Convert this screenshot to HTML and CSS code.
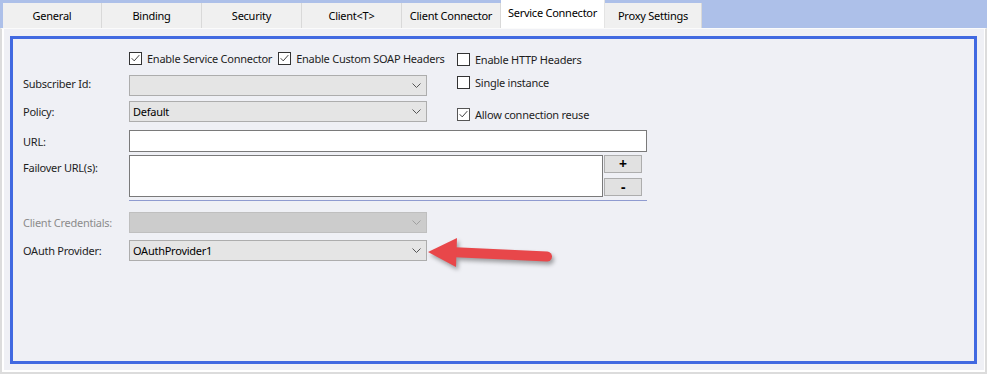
FILE: index.html
```html
<!DOCTYPE html>
<html>
<head>
    <title>Service Connector</title>
    <link rel="stylesheet" href="styles.css">
</head>
<body>
    <div class="window">
        <div class="tabs">
            <div class="tab w99">General</div>
            <div class="tab">Binding</div>
            <div class="tab">Security</div>
            <div class="tab">Client&lt;T&gt;</div>
            <div class="tab w99">Client Connector</div>
            <div class="tab active">Service Connector</div>
            <div class="tab w97">Proxy Settings</div>
        </div>

        <div class="page">
            <div class="group">
                <div class="top">
                    <div class="left">
                        <div class="checks">
                            <label class="check">
                                <span class="box"><svg viewBox="0 0 13 13"><path d="M2 6.2 L5 9.3 L11 2.5"/></svg></span>
                                Enable Service Connector
                            </label>
                            <label class="check">
                                <span class="box"><svg viewBox="0 0 13 13"><path d="M2 6.2 L5 9.3 L11 2.5"/></svg></span>
                                Enable Custom SOAP Headers
                            </label>
                        </div>
                        <div class="field">
                            <span class="label raised">Subscriber Id:</span>
                            <div class="combo">
                                <span class="value"></span>
                                <svg class="chev" viewBox="0 0 9 5"><polyline points="0.5,0.5 4.5,4.5 8.5,0.5"/></svg>
                            </div>
                        </div>
                        <div class="field policy">
                            <span class="label">Policy:</span>
                            <div class="combo">
                                <span class="value">Default</span>
                                <svg class="chev" viewBox="0 0 9 5"><polyline points="0.5,0.5 4.5,4.5 8.5,0.5"/></svg>
                            </div>
                        </div>
                    </div>
                    <div class="right">
                        <label class="check http">
                            <span class="box"></span>
                            Enable HTTP Headers
                        </label>
                        <label class="check single">
                            <span class="box"></span>
                            Single instance
                        </label>
                        <label class="check reuse">
                            <span class="box"><svg viewBox="0 0 13 13"><path d="M2 6.2 L5 9.3 L11 2.5"/></svg></span>
                            Allow connection reuse
                        </label>
                    </div>
                </div>

                <div class="field url">
                    <span class="label">URL:</span>
                    <div class="textbox"></div>
                </div>

                <div class="field failover">
                    <span class="label">Failover URL(s):</span>
                    <div class="textarea"></div>
                    <div class="buttons">
                        <div class="btn">+</div>
                        <div class="btn">-</div>
                    </div>
                </div>
                <div class="rule"></div>

                <div class="field creds disabled">
                    <span class="label">Client Credentials:</span>
                    <div class="combo">
                        <span class="value"></span>
                        <svg class="chev" viewBox="0 0 9 5"><polyline points="0.5,0.5 4.5,4.5 8.5,0.5"/></svg>
                    </div>
                </div>
                <div class="field oauth">
                    <span class="label">OAuth Provider:</span>
                    <div class="combo">
                        <span class="value">OAuthProvider1</span>
                        <svg class="chev" viewBox="0 0 9 5"><polyline points="0.5,0.5 4.5,4.5 8.5,0.5"/></svg>
                    </div>
                </div>
            </div>
        </div>

        <svg class="arrow" viewBox="0 0 145 50" width="145" height="50">
            <line x1="30" y1="24" x2="127" y2="28.5"/>
            <polygon points="8,24 37,10 36,39"/>
        </svg>
    </div>
</body>
</html>
```

FILE: styles.css
```css
body {
    margin: 0;
    padding: 0;
    font-family: "Noto Sans", "DejaVu Sans", sans-serif;
    font-size: 11px;
    line-height: 15px;
    letter-spacing: -0.25px;
    color: #1e1e1e;
}

.window {
    width: 987px;
    height: 374px;
    position: relative;
    background: #adc0e9;
    overflow: hidden;
}

/* tab strip */
.tabs {
    height: 28px;
    display: flex;
    align-items: flex-end;
    padding-left: 3px;
}

.tab {
    width: 100px;
    height: 25px;
    box-sizing: border-box;
    background: #f0f0f0;
    border-right: 1px solid #d9d9d9;
    display: flex;
    align-items: center;
    justify-content: center;
    color: #000;
    white-space: nowrap;
}

.tab.w99 {
    width: 99px;
}

.tab.w97 {
    width: 97px;
}

.tab.active {
    width: 104px;
    height: 28px;
    background: #ffffff;
    border-right: 1px solid #e4e4e4;
    padding-bottom: 4px;
}

/* tab page */
.page {
    height: 346px;
    box-sizing: border-box;
    background: #eff0f5;
    border: 2px solid #dcdcdc;
    border-top: 1px solid #fbfbfb;
    box-shadow: inset 2px 0 #fff, inset -1px 0 #fff, inset 0 -2px #fff;
    padding: 7px 8px 8px 8px;
}

.group {
    height: 100%;
    box-sizing: border-box;
    border: 3px solid #4169e1;
    padding: 13px 10px 0 10px;
}

.top {
    display: flex;
}

.left {
    width: 404px;
}

.right {
    margin-left: 30px;
    display: flex;
    flex-direction: column;
}

.checks {
    display: flex;
    gap: 6px;
    padding-left: 106px;
    height: 13px;
    margin-bottom: 10px;
}

.check {
    display: flex;
    align-items: center;
    gap: 5px;
    height: 13px;
    white-space: nowrap;
}

.box {
    width: 13px;
    height: 13px;
    box-sizing: border-box;
    border: 1px solid #333;
    background: #fff;
    flex: none;
    display: block;
}

.box svg {
    display: block;
    width: 11px;
    height: 11px;
    fill: none;
    stroke: #333;
    stroke-width: 1.1;
}

.right .http {
    margin-top: 1px;
}

.right .single {
    margin-top: 10px;
}

.right .reuse {
    margin-top: 19px;
}

.right .reuse .box {
    border-color: #555;
}

/* fields */
.field {
    display: flex;
    align-items: center;
}

.label {
    width: 106px;
    flex: none;
    white-space: nowrap;
}

.label.raised {
    margin-top: -4px;
}

.combo {
    width: 298px;
    height: 21px;
    box-sizing: border-box;
    background: #e5e5e5;
    border: 1px solid #adadad;
    display: flex;
    align-items: center;
    padding: 0 4px 0 3px;
}

.combo .value {
    flex: 1;
    color: #000;
}

.chev {
    width: 9px;
    height: 5px;
    fill: none;
    stroke: #555;
    stroke-width: 1;
    margin-right: 1px;
}

.policy {
    margin-top: 5px;
}

.url {
    margin-top: 8px;
}

.textbox {
    width: 518px;
    height: 22px;
    box-sizing: border-box;
    background: #fff;
    border: 1px solid #7a7a7a;
}

.failover {
    margin-top: 3px;
    align-items: flex-start;
}

.failover .label {
    margin-top: 5px;
}

.textarea {
    width: 474px;
    height: 42px;
    box-sizing: border-box;
    background: #fff;
    border: 1px solid #7a7a7a;
}

.buttons {
    margin-left: 1px;
    display: flex;
    flex-direction: column;
    gap: 5px;
}

.btn {
    width: 38px;
    height: 18px;
    box-sizing: border-box;
    background: #e1e1e1;
    border: 1px solid #adadad;
    display: flex;
    align-items: center;
    justify-content: center;
    font-size: 14px;
    font-weight: bold;
    color: #000;
    line-height: 1;
}

.rule {
    margin: 3px 0 0 106px;
    width: 518px;
    height: 1px;
    background: #8f9bd0;
}

.creds {
    margin-top: 11px;
}

.disabled .label {
    color: #8c8c8c;
}

.disabled .combo {
    background: #cccccc;
    border-color: #bfbfbf;
}

.disabled .chev {
    stroke: #a0a0a0;
}

.oauth {
    margin-top: 7px;
}

/* callout arrow over the form */
.arrow {
    position: absolute;
    left: 420px;
    top: 228px;
    filter: drop-shadow(2px 3px 2px rgba(0, 0, 0, 0.35));
}

.arrow line {
    stroke: #e8474a;
    stroke-width: 10;
    stroke-linecap: round;
}

.arrow polygon {
    fill: #e8474a;
}
```
